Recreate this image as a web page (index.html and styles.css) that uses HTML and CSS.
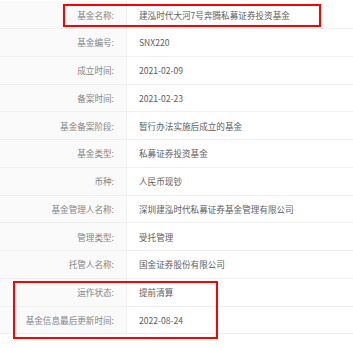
FILE: index.html
```html
<!DOCTYPE html>
<html lang="zh-CN">
<head>
<meta charset="utf-8">
<link rel="stylesheet" href="styles.css">
</head>
<body>
<div class="page">
  <div class="info">
    <div class="row"><div class="label">基金名称:</div><div class="value">建泓时代大河7号奔腾私募证券投资基金</div></div>
    <div class="row"><div class="label">基金编号:</div><div class="value">SNX220</div></div>
    <div class="row"><div class="label">成立时间:</div><div class="value">2021-02-09</div></div>
    <div class="row"><div class="label">备案时间:</div><div class="value">2021-02-23</div></div>
    <div class="row"><div class="label">基金备案阶段:</div><div class="value">暂行办法实施后成立的基金</div></div>
    <div class="row"><div class="label">基金类型:</div><div class="value">私募证券投资基金</div></div>
    <div class="row"><div class="label">币种:</div><div class="value">人民币现钞</div></div>
    <div class="row"><div class="label">基金管理人名称:</div><div class="value">深圳建泓时代私募证券基金管理有限公司</div></div>
    <div class="row"><div class="label">管理类型:</div><div class="value">受托管理</div></div>
    <div class="row"><div class="label">托管人名称:</div><div class="value">国金证券股份有限公司</div></div>
    <div class="row"><div class="label">运作状态:</div><div class="value">提前清算</div></div>
    <div class="row"><div class="label">基金信息最后更新时间:</div><div class="value">2022-08-24</div></div>
  </div>
  <div class="mark mark-top"></div>
  <div class="mark mark-bottom"></div>
</div>
</body>
</html>
```
FILE: styles.css
```css
html, body {
  margin: 0;
  padding: 0;
  background: #fff;
}
.page {
  position: relative;
  width: 353px;
  height: 348px;
  overflow: hidden;
  font-family: "Noto Sans CJK SC", "Microsoft YaHei", sans-serif;
  font-size: 8.6px;
}
.info {
  padding-top: 1.25px;
  display: flex;
  flex-direction: column;
}
.row {
  display: grid;
  grid-template-columns: 127px 1fr;
  height: 27.75px;
  box-sizing: border-box;
  border-bottom: 1px solid #efefef;
}
.label {
  background: #fafafa;
  border-right: 1px solid #efefef;
  color: #858585;
  text-align: right;
  padding-right: 12px;
  display: flex;
  align-items: center;
  justify-content: flex-end;
}
.value {
  color: #606060;
  padding-left: 12px;
  display: flex;
  align-items: center;
}
.mark {
  position: absolute;
  border: 2px solid #f00;
  box-sizing: border-box;
}
.mark-top {
  left: 63px;
  top: 4px;
  width: 258px;
  height: 23px;
}
.mark-bottom {
  left: 13px;
  top: 281px;
  width: 205px;
  height: 58px;
}
```
